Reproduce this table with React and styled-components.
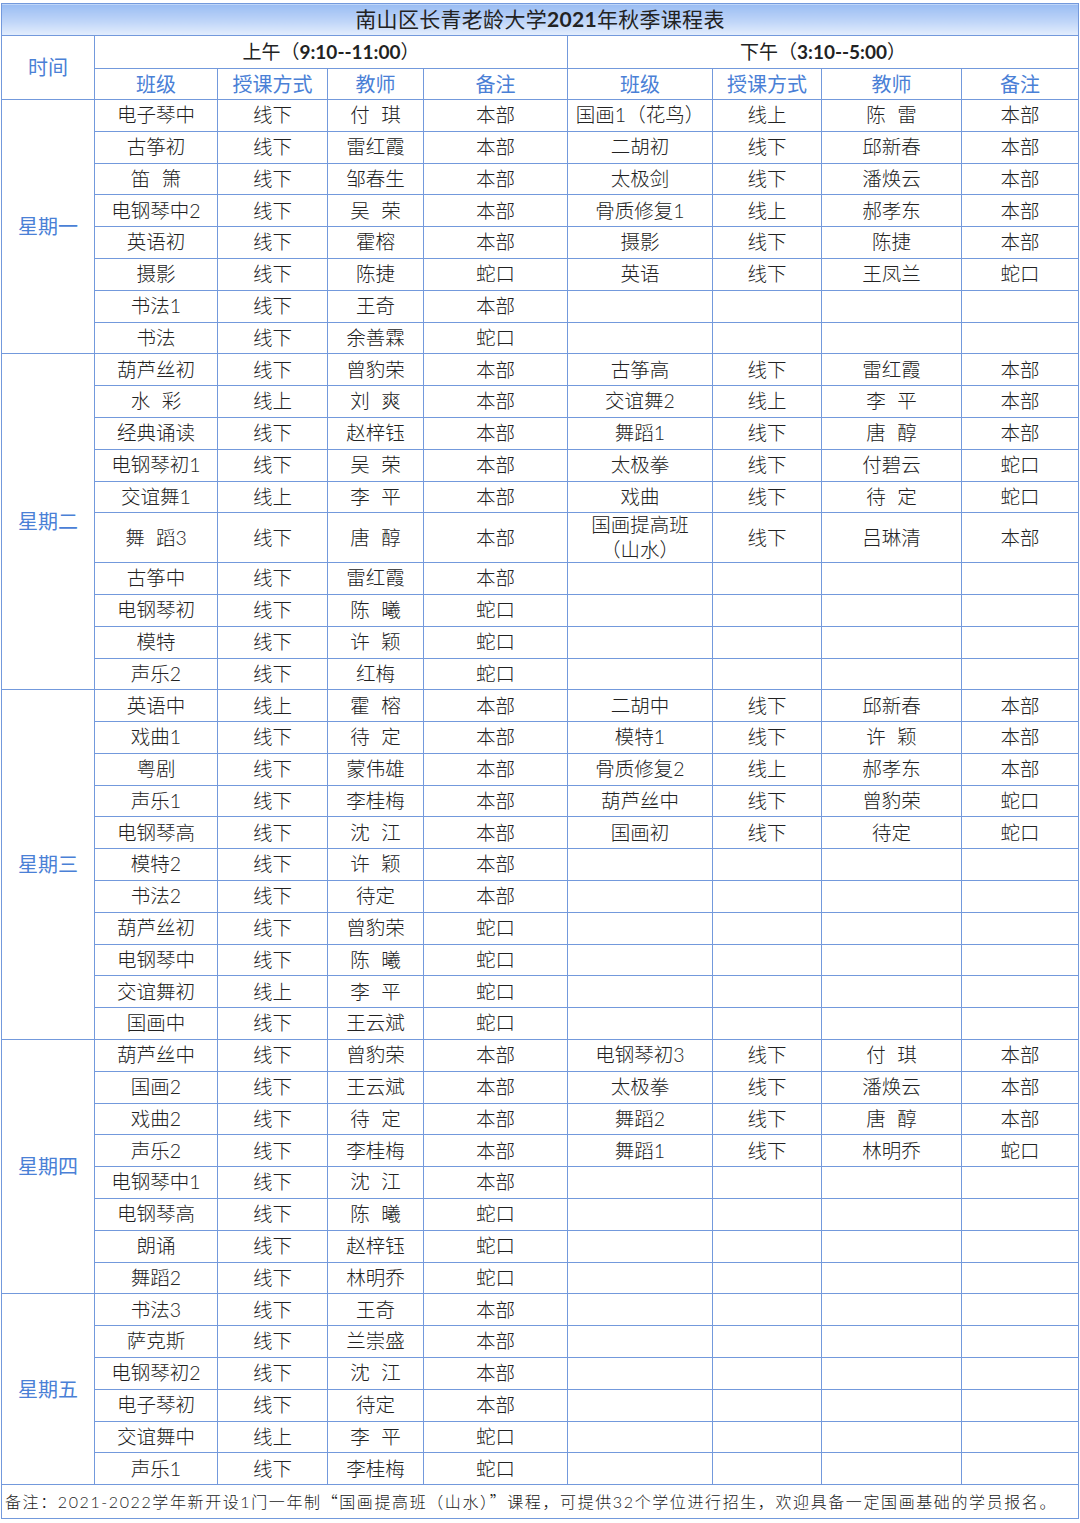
import styled, { createGlobalStyle } from 'styled-components';

const GlobalStyle = createGlobalStyle`
	body {
		margin: 0;
		background: #ffffff;
	}
`;

const BORDER = '#7399dc';
const BLUE = '#4a80d6';

const Page = styled.div`
	padding: 3px 0 0 1px;
	width: 1080px;
	box-sizing: border-box;
`;

const Sheet = styled.table`
	border-collapse: collapse;
	table-layout: fixed;
	width: 1077px;
	font-family: Lato, 'Noto Sans CJK SC', sans-serif;
	color: #222222;
`;

const Cell = styled.td`
	border: 1.5px solid ${BORDER};
	padding: 0;
	text-align: center;
	vertical-align: middle;
	font-size: 19.5px;
	font-weight: 300;
	line-height: 1.25;
	word-spacing: 6px;
	white-space: pre-line;
	color: #222222;
`;

const TitleCell = styled(Cell)`
	font-size: 21px;
	font-weight: 400;
	letter-spacing: 0.3px;
	background: linear-gradient(to bottom, #9abdf3 0%, #bfd5f8 55%, #e4eefd 100%);
`;

const HeadCell = styled(Cell)`
	font-size: 19px;
	font-weight: 400;
`;

const LabelCell = styled(Cell)`
	font-size: 20px;
	font-weight: 400;
	color: ${BLUE};
`;

const NoteCell = styled(Cell)`
	text-align: left;
	padding-left: 3px;
	font-size: 16px;
	letter-spacing: 1.6px;
	word-spacing: 0;
	color: #1a1a1a;
`;

const Row = styled.tr`
	height: ${p => p.$h || 31.8}px;
`;

const Num = styled.span`
	font-weight: 700;
`;

const Quote = styled.span`
	font-family: 'Noto Sans CJK SC', sans-serif;
`;

const widths = [93, 123, 110, 96, 144, 145, 109, 140, 117];

const days = [
	{
		name: '星期一',
		rows: [
			['电子琴中', '线下', '付 琪', '本部', '国画1（花鸟）', '线上', '陈 雷', '本部'],
			['古筝初', '线下', '雷红霞', '本部', '二胡初', '线下', '邱新春', '本部'],
			['笛 箫', '线下', '邹春生', '本部', '太极剑', '线下', '潘焕云', '本部'],
			['电钢琴中2', '线下', '吴 荣', '本部', '骨质修复1', '线上', '郝孝东', '本部'],
			['英语初', '线下', '霍榕', '本部', '摄影', '线下', '陈捷', '本部'],
			['摄影', '线下', '陈捷', '蛇口', '英语', '线下', '王凤兰', '蛇口'],
			['书法1', '线下', '王奇', '本部'],
			['书法', '线下', '余善霖', '蛇口'],
		],
	},
	{
		name: '星期二',
		rows: [
			['葫芦丝初', '线下', '曾豹荣', '本部', '古筝高', '线下', '雷红霞', '本部'],
			['水 彩', '线上', '刘 爽', '本部', '交谊舞2', '线上', '李 平', '本部'],
			['经典诵读', '线下', '赵梓钰', '本部', '舞蹈1', '线下', '唐 醇', '本部'],
			['电钢琴初1', '线下', '吴 荣', '本部', '太极拳', '线下', '付碧云', '蛇口'],
			['交谊舞1', '线上', '李 平', '本部', '戏曲', '线下', '待 定', '蛇口'],
			['舞 蹈3', '线下', '唐 醇', '本部', '国画提高班\n（山水）', '线下', '吕琳清', '本部'],
			['古筝中', '线下', '雷红霞', '本部'],
			['电钢琴初', '线下', '陈 曦', '蛇口'],
			['模特', '线下', '许 颖', '蛇口'],
			['声乐2', '线下', '红梅', '蛇口'],
		],
	},
	{
		name: '星期三',
		rows: [
			['英语中', '线上', '霍 榕', '本部', '二胡中', '线下', '邱新春', '本部'],
			['戏曲1', '线下', '待 定', '本部', '模特1', '线下', '许 颖', '本部'],
			['粤剧', '线下', '蒙伟雄', '本部', '骨质修复2', '线上', '郝孝东', '本部'],
			['声乐1', '线下', '李桂梅', '本部', '葫芦丝中', '线下', '曾豹荣', '蛇口'],
			['电钢琴高', '线下', '沈 江', '本部', '国画初', '线下', '待定', '蛇口'],
			['模特2', '线下', '许 颖', '本部'],
			['书法2', '线下', '待定', '本部'],
			['葫芦丝初', '线下', '曾豹荣', '蛇口'],
			['电钢琴中', '线下', '陈 曦', '蛇口'],
			['交谊舞初', '线上', '李 平', '蛇口'],
			['国画中', '线下', '王云斌', '蛇口'],
		],
	},
	{
		name: '星期四',
		rows: [
			['葫芦丝中', '线下', '曾豹荣', '本部', '电钢琴初3', '线下', '付 琪', '本部'],
			['国画2', '线下', '王云斌', '本部', '太极拳', '线下', '潘焕云', '本部'],
			['戏曲2', '线下', '待 定', '本部', '舞蹈2', '线下', '唐 醇', '本部'],
			['声乐2', '线下', '李桂梅', '本部', '舞蹈1', '线下', '林明乔', '蛇口'],
			['电钢琴中1', '线下', '沈 江', '本部'],
			['电钢琴高', '线下', '陈 曦', '蛇口'],
			['朗诵', '线下', '赵梓钰', '蛇口'],
			['舞蹈2', '线下', '林明乔', '蛇口'],
		],
	},
	{
		name: '星期五',
		rows: [
			['书法3', '线下', '王奇', '本部'],
			['萨克斯', '线下', '兰崇盛', '本部'],
			['电钢琴初2', '线下', '沈 江', '本部'],
			['电子琴初', '线下', '待定', '本部'],
			['交谊舞中', '线上', '李 平', '蛇口'],
			['声乐1', '线下', '李桂梅', '蛇口'],
		],
	},
];

const columns = ['班级', '授课方式', '教师', '备注'];

const App = () => {
	return (
		<Page>
			<GlobalStyle />
			<Sheet>
				<colgroup>
					{widths.map((w, i) => (
						<col key={i} style={{ width: w }} />
					))}
				</colgroup>
				<tbody>
					<Row $h={32}>
						<TitleCell colSpan={9}>
							南山区长青老龄大学<Num>2021</Num>年秋季课程表
						</TitleCell>
					</Row>
					<Row $h={33}>
						<LabelCell rowSpan={2}>时间</LabelCell>
						<HeadCell colSpan={4}>
							上午（<Num>9:10--11:00</Num>）
						</HeadCell>
						<HeadCell colSpan={4}>
							下午（<Num>3:10--5:00</Num>）
						</HeadCell>
					</Row>
					<Row $h={31}>
						{[...columns, ...columns].map((c, i) => (
							<LabelCell key={i}>{c}</LabelCell>
						))}
					</Row>
					{days.map(day =>
						day.rows.map((r, i) => {
							const cells = [...r, ...Array(8 - r.length).fill('')];
							const tall = cells[4].includes('\n');
							return (
								<Row key={day.name + i} $h={tall ? 49 : 31.8}>
									{i === 0 && (
										<LabelCell rowSpan={day.rows.length}>{day.name}</LabelCell>
									)}
									{cells.map((c, j) => (
										<Cell key={j}>{c}</Cell>
									))}
								</Row>
							);
						})
					)}
					<Row $h={34}>
						<NoteCell colSpan={9}>
							备注：2021-2022学年新开设1门一年制<Quote>“</Quote>国画提高班（山水）<Quote>”</Quote>课程，可提供32个学位进行招生，欢迎具备一定国画基础的学员报名。
						</NoteCell>
					</Row>
				</tbody>
			</Sheet>
		</Page>
	);
};

export default App;
